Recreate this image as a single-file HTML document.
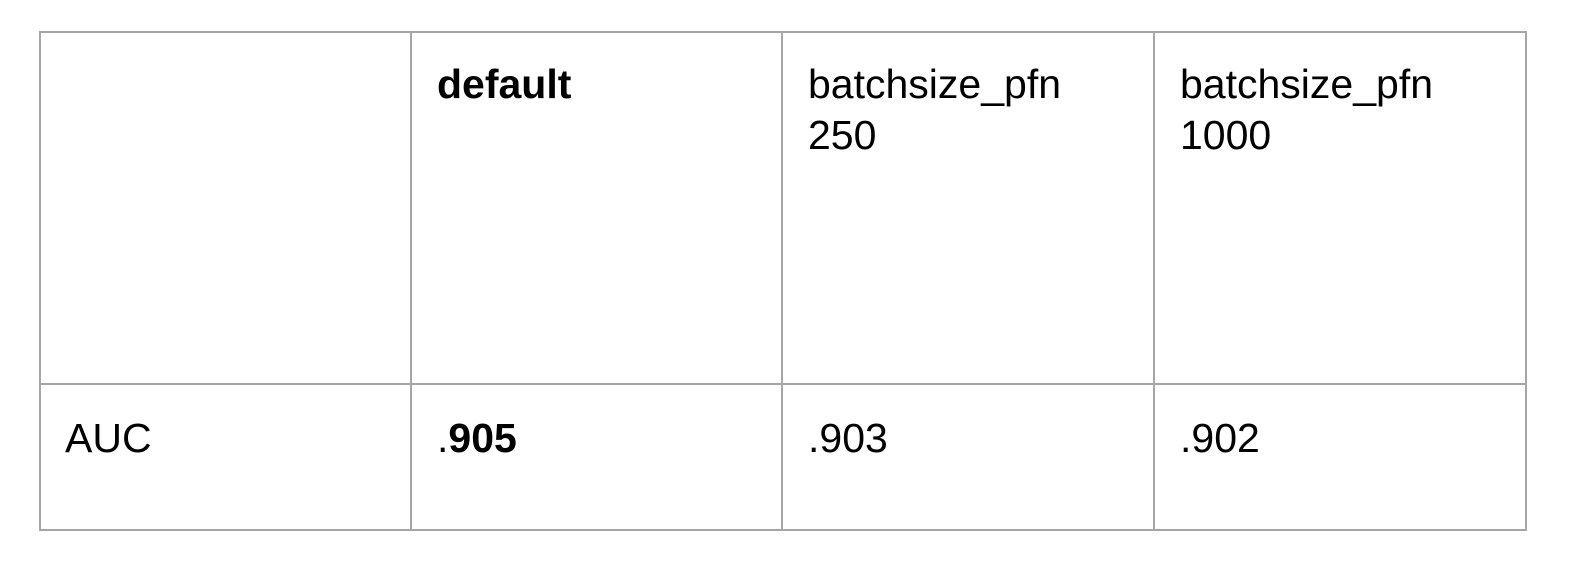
<!DOCTYPE html>
<html><head><style>
html,body{margin:0;padding:0;background:#fff;width:1588px;height:562px;overflow:hidden}
.l{position:absolute;background:#a6a6a6}
.t{position:absolute;font-family:"Liberation Sans",Arial,sans-serif;font-size:41px;line-height:51px;color:#000;white-space:nowrap}
b{font-weight:bold}
</style></head><body>
<div class="l" style="left:39px;top:31px;width:1488px;height:2px"></div>
<div class="l" style="left:39px;top:383px;width:1488px;height:2px"></div>
<div class="l" style="left:39px;top:529px;width:1488px;height:2px"></div>
<div class="l" style="left:39px;top:31px;width:2px;height:500px"></div>
<div class="l" style="left:410px;top:31px;width:2px;height:500px"></div>
<div class="l" style="left:781px;top:31px;width:2px;height:500px"></div>
<div class="l" style="left:1153px;top:31px;width:2px;height:500px"></div>
<div class="l" style="left:1525px;top:31px;width:2px;height:500px"></div>

<div class="t" style="left:437px;top:59px"><b>default</b></div>
<div class="t" style="left:808px;top:59px">batchsize_pfn<br>250</div>
<div class="t" style="left:1180px;top:59px">batchsize_pfn<br>1000</div>

<div class="t" style="left:65px;top:413px">AUC</div>
<div class="t" style="left:437px;top:413px">.<b>905</b></div>
<div class="t" style="left:808px;top:413px">.903</div>
<div class="t" style="left:1180px;top:413px">.902</div>
</body></html>
